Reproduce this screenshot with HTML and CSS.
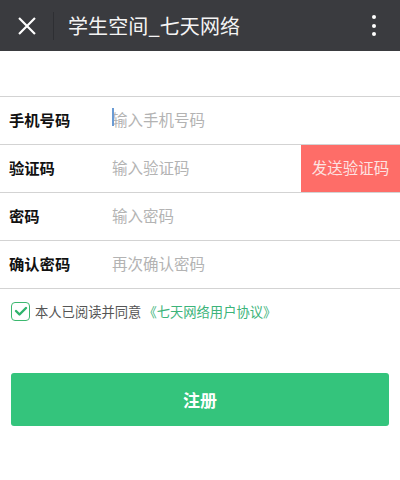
FILE: index.html
```html
<!DOCTYPE html>
<html lang="zh">
<head>
<meta charset="utf-8">
<link rel="stylesheet" href="styles.css">
</head>
<body>
<header class="bar">
  <div class="close">
    <svg width="20" height="20" viewBox="0 0 20 20"><path d="M2 2 L18 18 M18 2 L2 18" stroke="#fff" stroke-width="2.4" stroke-linecap="square" fill="none"/></svg>
  </div>
  <div class="sep"></div>
  <div class="title">学生空间_七天网络</div>
  <div class="more">
    <span class="dot"></span><span class="dot"></span><span class="dot"></span>
  </div>
</header>
<main class="page">
  <div class="form">
    <div class="row">
      <div class="label">手机号码</div>
      <div class="field"><span class="cursor"></span><span class="ph">输入手机号码</span></div>
    </div>
    <div class="row">
      <div class="label">验证码</div>
      <div class="field"><span class="ph">输入验证码</span></div>
      <div class="send"><span class="send-text">发送验证码</span></div>
    </div>
    <div class="row">
      <div class="label">密码</div>
      <div class="field"><span class="ph">输入密码</span></div>
    </div>
    <div class="row">
      <div class="label">确认密码</div>
      <div class="field"><span class="ph">再次确认密码</span></div>
    </div>
  </div>
  <div class="agree">
    <span class="check">
      <svg width="14" height="12" viewBox="0 0 14 12"><path d="M2 6 L5.5 9.5 L12 3" stroke="#2fb46c" stroke-width="2.4" fill="none" stroke-linecap="round" stroke-linejoin="round"/></svg>
    </span>
    <span class="agree-text">本人已阅读并同意</span>
    <span class="link">《七天网络用户协议》</span>
  </div>
  <div class="btn">注册</div>
</main>
</body>
</html>
```
FILE: styles.css
```css
html, body { margin: 0; padding: 0; }
body {
  width: 400px;
  height: 480px;
  background: #fff;
  font-family: "Noto Sans CJK SC", "Noto Sans", sans-serif;
  overflow: hidden;
}
.bar {
  height: 51px;
  background: #3a3b3f;
  display: flex;
  align-items: center;
}
.close {
  width: 18px;
  height: 18px;
  margin-left: 18px;
  display: flex;
}
.close svg { width: 18px; height: 18px; }
.sep {
  width: 1px;
  height: 28px;
  background: #2e2f33;
  margin-left: 17px;
}
.title {
  margin-left: 14px;
  color: #f4f4f4;
  font-size: 20px;
  line-height: 51px;
  flex: 1;
  letter-spacing: 0.1px;
}
.more {
  width: 6px;
  margin-right: 23px;
  display: flex;
  flex-direction: column;
  gap: 4.5px;
  align-items: center;
}
.dot {
  width: 4px;
  height: 4px;
  border-radius: 50%;
  background: #fff;
}
.page { padding-top: 45px; }
.form {
  border-top: 1px solid #d3d3d3;
}
.row {
  height: 47px;
  border-bottom: 1px solid #d3d3d3;
  display: flex;
  align-items: center;
}
.label {
  width: 103px;
  padding-left: 9px;
  padding-bottom: 4px;
  font-size: 15.3px;
  font-weight: bold;
  color: #111;
}
.field {
  flex: 1;
  display: flex;
  align-items: center;
  position: relative;
  padding-bottom: 4px;
}
.ph {
  font-size: 15.5px;
  color: #b3b3b3;
}
.cursor {
  position: absolute;
  left: 0;
  top: 0;
  width: 2px;
  height: 18px;
  background: #6a9bd4;
}
.send {
  width: 99px;
  height: 47px;
  background: #fe6d68;
  color: #fde3e2;
  font-size: 15.5px;
  display: flex;
  align-items: center;
  justify-content: center;
}
.send-text { padding-bottom: 4px; }
.agree {
  display: flex;
  align-items: center;
  padding: 11px 0 0 11px;
  height: 22px;
}
.check {
  width: 17px;
  height: 17px;
  border: 1.5px solid #3cb86f;
  border-radius: 4px;
  display: flex;
  align-items: center;
  justify-content: center;
  margin-right: 5px;
}
.agree-text {
  font-size: 13.3px;
  color: #555;
}
.link {
  font-size: 13.3px;
  color: #3cb47a;
  margin-left: 2px;
}
.btn {
  margin: 51px 11px 0 11px;
  height: 53px;
  background: #34c47c;
  border-radius: 3px;
  color: #fff;
  font-size: 17px;
  font-weight: bold;
  display: flex;
  align-items: center;
  justify-content: center;
}
```
